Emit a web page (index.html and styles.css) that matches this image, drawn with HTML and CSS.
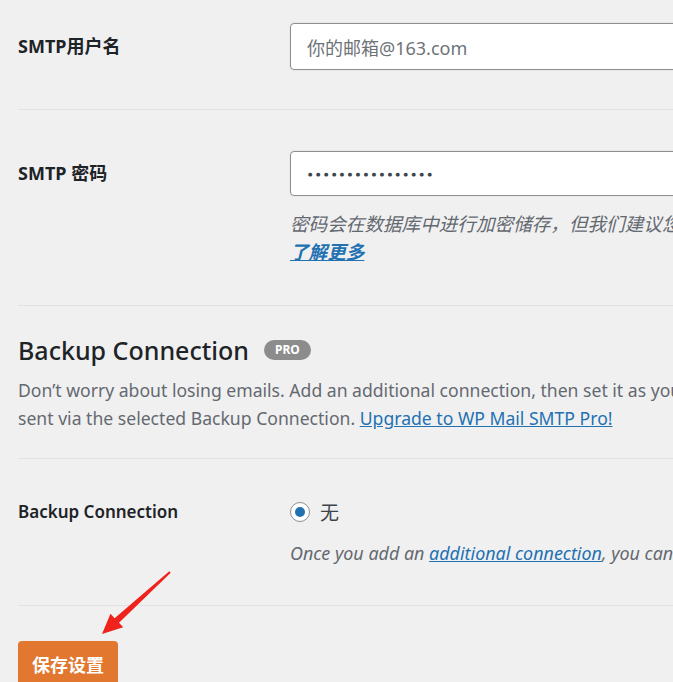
FILE: index.html
```html
<!DOCTYPE html>
<html lang="zh-CN">
<head>
<meta charset="utf-8">
<title>WP Mail SMTP 设置</title>
<link rel="stylesheet" href="styles.css">
</head>
<body>
<div class="page">
  <div class="row row-user">
    <div class="label label-tall">SMTP用户名</div>
    <div class="field">
      <div class="input placeholder">你的邮箱@163.com</div>
    </div>
  </div>

  <div class="row row-pass">
    <div class="label label-pass">SMTP 密码</div>
    <div class="field">
      <div class="input input-pass"><span class="dots">●●●●●●●●●●●●●●●●</span></div>
      <p class="desc desc-cn">密码会在数据库中进行加密储存，但我们建议您使用常量来储存密码。<br><a class="desc-link" href="#">了解更多</a></p>
    </div>
  </div>

  <div class="section">
    <h2 class="section-title">Backup Connection <span class="badge">PRO</span></h2>
    <p class="section-text">Don’t worry about losing emails. Add an additional connection, then set it as your Backup Connection. Emails that fail to send with the Primary Connection will be<br>sent via the selected Backup Connection. <a class="link" href="#">Upgrade to WP Mail SMTP Pro!</a></p>
  </div>

  <div class="row row-backup">
    <div class="label label-semi">Backup Connection</div>
    <div class="field">
      <div class="radio-line"><span class="radio"><span class="radio-dot"></span></span><span class="radio-text">无</span></div>
      <p class="desc desc-en">Once you add an <a class="link" href="#">additional connection</a>, you can select it here.</p>
    </div>
  </div>

  <div class="actions">
    <button class="save" type="button">保存设置</button>
  </div>

  <svg class="arrow" width="673" height="682" viewBox="0 0 673 682" aria-hidden="true">
    <polygon points="102,634 110.5,613.8 114.6,618.2 169.3,571.3 170.7,572.7 119,622.8 123.2,627.3" fill="#f0221c"/>
  </svg>
</div>
</body>
</html>
```

FILE: styles.css
```css
html, body {
  margin: 0;
  padding: 0;
}
body {
  background: #f0f0f1;
  width: 673px;
  height: 682px;
  overflow: hidden;
  font-family: "Noto Sans", "Noto Sans CJK SC", sans-serif;
  color: #1d2327;
}
.page {
  position: relative;
  width: 1100px;
  padding-left: 18px;
}
.row {
  display: grid;
  grid-template-columns: 272px 1fr;
  border-bottom: 1px solid #e2e2e4;
}
.row-user {
  padding: 23px 0 39px;
}
.row-pass {
  padding: 41px 0 39px;
}
.row-backup {
  padding: 39px 0 38px;
}
.label {
  font-size: 18px;
  font-weight: 700;
  color: #1d2327;
}
.label-tall {
  line-height: 47px;
}
.label-pass {
  line-height: 45px;
}
.label-semi {
  font-size: 17px;
  font-weight: 600;
  line-height: 28px;
}
.input {
  box-sizing: border-box;
  background: #fff;
  border: 1px solid #8c8f94;
  border-radius: 4px;
  box-shadow: 0 0 0 1px rgba(0,0,0,0.03);
  width: 600px;
  padding-left: 16px;
  font-size: 18px;
  display: flex;
  align-items: center;
}
.placeholder {
  height: 47px;
  color: #6e7378;
}
.input-pass {
  height: 45px;
  color: #3c434a;
}
.dots {
  font-size: 5px;
  letter-spacing: 3.6px;
  font-family: "DejaVu Sans", sans-serif;
  padding-left: 1px;
}
.desc {
  margin: 14px 0 0;
  font-size: 17.9px;
  line-height: 28px;
  font-style: italic;
  color: #646970;
  white-space: nowrap;
}
.desc-cn {
  font-size: 18.6px;
}
.desc-link {
  color: #2271b1;
  font-weight: 700;
  text-decoration: underline;
}
.section {
  padding: 27px 0 26px;
  border-bottom: 1px solid #e2e2e4;
}
.section-title {
  margin: 0;
  font-size: 25px;
  line-height: 34px;
  font-weight: 500;
  color: #1d2327;
  display: flex;
  align-items: center;
}
.badge {
  display: inline-block;
  margin-left: 15px;
  background: #8c8c8c;
  color: #fff;
  font-size: 12px;
  font-weight: 700;
  line-height: 20px;
  height: 20px;
  padding: 0 11px;
  border-radius: 10px;
}
.section-text {
  margin: 9px 0 0;
  font-size: 17.6px;
  line-height: 28px;
  color: #646970;
  white-space: nowrap;
}
.link {
  color: #2271b1;
  text-decoration: underline;
}
.radio-line {
  display: flex;
  align-items: center;
  height: 28px;
}
.radio {
  box-sizing: border-box;
  width: 20px;
  height: 20px;
  border: 1px solid #8c8f94;
  border-radius: 50%;
  background: #fff;
  display: flex;
  align-items: center;
  justify-content: center;
}
.radio-dot {
  width: 10px;
  height: 10px;
  border-radius: 50%;
  background: #2271b1;
}
.radio-text {
  margin-left: 10px;
  font-size: 19px;
  color: #3c434a;
}
.desc-en {
  margin-top: 13px;
}
.actions {
  padding-top: 35px;
}
.save {
  width: 100px;
  height: 46px;
  border: none;
  border-radius: 4px;
  background: #e27730;
  color: #fff;
  font-family: "Noto Sans CJK SC", sans-serif;
  font-size: 18px;
  font-weight: 700;
  padding: 0;
}
.arrow {
  position: absolute;
  left: 0;
  top: 0;
  pointer-events: none;
}
```
